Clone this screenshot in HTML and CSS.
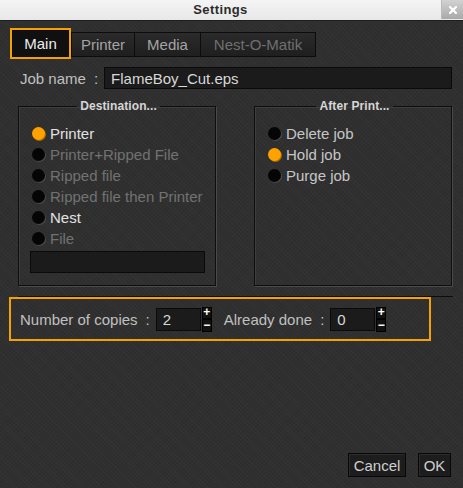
FILE: index.html
```html
<!DOCTYPE html>
<html>
<head>
<meta charset="utf-8">
<link rel="stylesheet" href="styles.css">
</head>
<body>
<div class="window">
  <div class="titlebar">
    <div class="title">Settings</div>
    <div class="close"><svg width="8" height="8" viewBox="0 0 8 8"><path d="M1 1 L7 7 M7 1 L1 7" stroke="#fff" stroke-width="2.2" stroke-linecap="square"/></svg></div>
  </div>

  <div class="tabs">
    <div class="tab active">Main</div>
    <div class="tab t-printer">Printer</div>
    <div class="tab t-media">Media</div>
    <div class="tab t-nest disabled">Nest-O-Matik</div>
  </div>

  <div class="jobrow">
    <span class="lbl">Job name</span><span class="colon">:</span>
    <div class="field wide">FlameBoy_Cut.eps</div>
  </div>

  <div class="groups">
    <fieldset class="group">
      <legend>Destination...</legend>
      <div class="opt"><span class="radio on"></span><span>Printer</span></div>
      <div class="opt dis"><span class="radio"></span><span>Printer+Ripped File</span></div>
      <div class="opt dis"><span class="radio"></span><span>Ripped file</span></div>
      <div class="opt dis"><span class="radio"></span><span>Ripped file then Printer</span></div>
      <div class="opt"><span class="radio"></span><span>Nest</span></div>
      <div class="opt dis"><span class="radio"></span><span>File</span></div>
      <div class="field filefield"></div>
    </fieldset>
    <fieldset class="group right">
      <legend>After Print...</legend>
      <div class="opt soft"><span class="radio"></span><span>Delete job</span></div>
      <div class="opt soft"><span class="radio on"></span><span>Hold job</span></div>
      <div class="opt soft"><span class="radio"></span><span>Purge job</span></div>
    </fieldset>
  </div>

  <div class="sep"></div>

  <div class="copies">
    <span class="lbl">Number of copies</span><span class="colon">:</span>
    <div class="field num">2</div>
    <div class="spin"><span class="sb">+</span><span class="sb">&minus;</span></div>
    <span class="lbl done">Already done</span><span class="colon">:</span>
    <div class="field num">0</div>
    <div class="spin"><span class="sb">+</span><span class="sb">&minus;</span></div>
  </div>

  <div class="buttons">
    <div class="btn cancel">Cancel</div>
    <div class="btn ok">OK</div>
  </div>
</div>
</body>
</html>
```

FILE: styles.css
```css
* { box-sizing: border-box; }
html, body { margin: 0; padding: 0; }
body {
  width: 463px;
  height: 488px;
  overflow: hidden;
  font-family: "Liberation Sans", Arial, sans-serif;
  font-size: 15px;
  color: #c8c8c8;
  background: #2f2f2f;
}
.window {
  height: 488px;
  display: flex;
  flex-direction: column;
  background-color: #2f2f2f;
  background-image:
    repeating-linear-gradient(45deg, rgba(255,255,255,0.018) 0 1px, transparent 1px 3px),
    repeating-linear-gradient(-45deg, rgba(0,0,0,0.05) 0 1px, transparent 1px 3px);
}
.titlebar {
  height: 21px;
  display: flex;
  background: linear-gradient(#f4f4f4, #e8e8e8);
  border-bottom: 1px solid #1e1e1e;
}
.title {
  flex: 1;
  text-align: center;
  font-weight: bold;
  font-size: 13px;
  letter-spacing: 0.4px;
  line-height: 20px;
  color: #2c2c2c;
}
.close {
  width: 22px;
  height: 19px;
  background: linear-gradient(#d2d2d2, #a9a9a9);
  border-left: 1px solid #bbb;
  display: flex;
  align-items: center;
  justify-content: center;
}
.close svg { display: block; }

.tabs {
  display: flex;
  align-items: flex-end;
  margin: 9px 0 0 12px;
}
.tab {
  height: 25px;
  border: 1px solid #0c0c0c;
  background: linear-gradient(#2b2b2b, #1f1f1f);
  color: #a4a4a4;
  display: flex;
  align-items: center;
  justify-content: center;
  line-height: 1;
}
.tab.active {
  width: 57px;
  height: 27px;
  margin-right: 2px;
  background: #101010;
  color: #ececec;
  outline: 2px solid #f5a200;
}
.t-printer { width: 64px; }
.t-media { width: 66px; border-left: none; }
.t-nest { width: 115px; border-left: none; }
.tab.disabled { color: #707070; }

.jobrow {
  display: flex;
  align-items: center;
  margin: 10px 0 0 20px;
  color: #c0c0c0;
}
.colon { margin: 0 6px 0 8px; }
.field {
  background: #1b1b1b;
  border: 1px solid #0a0a0a;
  color: #d8d8d8;
  display: flex;
  align-items: center;
  padding-left: 6px;
}
.wide { width: 348px; height: 22px; }

.groups {
  display: flex;
  gap: 38px;
  margin: 10px 0 0 18px;
}
.group {
  width: 198px;
  height: 187px;
  margin: 0;
  padding: 10px 10px 0 13px;
  border: 1px solid #0e0e0e;
  box-shadow: 1px 1px 0 #4a4a4a, inset 1px 1px 0 #3e3e3e;
  min-width: 0;
}
.group legend {
  margin: 0 auto;
  padding: 0 3px;
  font-size: 12px;
  line-height: 14px;
  font-weight: bold;
  color: #d6d6d6;
  letter-spacing: 0.1px;
}
.opt {
  height: 21px;
  display: flex;
  align-items: center;
  gap: 5px;
  color: #e2e2e2;
}
.opt.dis { color: #727272; }
.opt.soft { color: #c6c6c6; }
.radio {
  width: 13px;
  height: 13px;
  border-radius: 50%;
  background: #050505;
  box-shadow: 1px 1px 0 rgba(120,120,120,0.35);
  flex: none;
}
.radio.on {
  background: #ffa200;
  box-shadow: 1px 1px 0 #a86a00;
}
.filefield {
  width: 175px;
  height: 22px;
  margin: 2px 0 0 -2px;
}

.sep {
  height: 1px;
  width: 435px;
  margin: 10px 0 0 18px;
  background: #0c0c0c;
}
.copies {
  width: 422px;
  height: 44px;
  margin-left: 9px;
  border: 2px solid #f5a200;
  display: flex;
  align-items: center;
  padding-left: 9px;
  color: #c0c0c0;
}
.num {
  width: 45px;
  height: 23px;
}
.spin {
  display: flex;
  flex-direction: column;
  width: 10px;
  height: 25px;
  margin-left: 1px;
}
.sb {
  flex: 1;
  background: #121212;
  border: 1px solid #000;
  color: #fff;
  font-weight: bold;
  font-size: 12px;
  line-height: 9px;
  display: flex;
  justify-content: center;
  align-items: center;
}
.done { margin-left: 12px; }

.buttons {
  margin-top: auto;
  display: flex;
  justify-content: flex-end;
  gap: 12px;
  padding: 0 12px 11px 0;
}
.btn {
  height: 24px;
  background: #1d1d1d;
  border: 1px solid #080808;
  box-shadow: inset 1px 1px 0 #2c2c2c;
  color: #cfcfcf;
  display: flex;
  align-items: center;
  justify-content: center;
}
.cancel { width: 58px; }
.ok { width: 33px; }
```
